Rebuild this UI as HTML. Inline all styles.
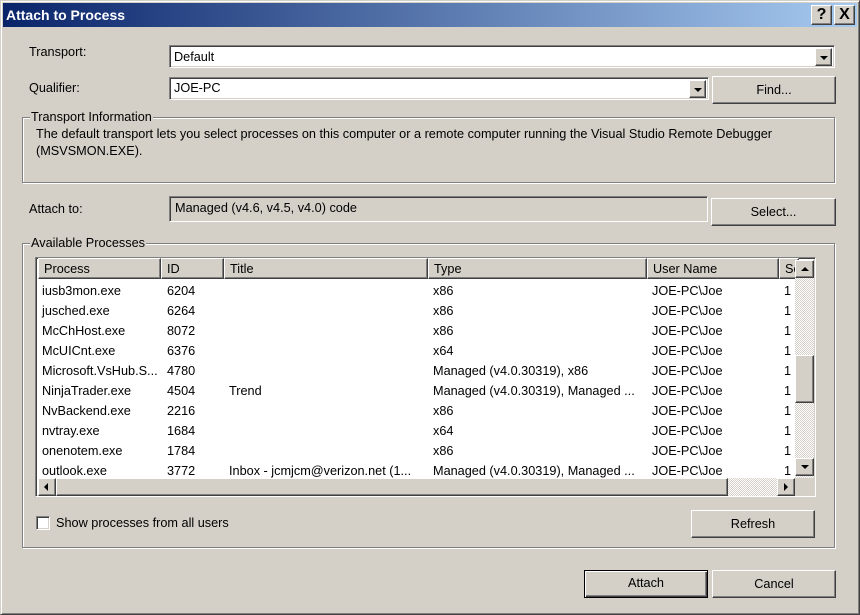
<!DOCTYPE html>
<html><head><meta charset="utf-8"><style>
*{box-sizing:border-box;margin:0;padding:0}
body{width:860px;height:615px;overflow:hidden;background:#d4d0c8;font-family:"Liberation Sans","DejaVu Sans",sans-serif;font-size:12.7px;color:#000;position:relative}
.a{position:absolute}
.win{left:0;top:0;width:860px;height:615px;border:1px solid #d4d0c8;border-right-color:#404040;border-bottom-color:#404040;box-shadow:inset 1px 1px 0 #fff,inset -1px -1px 0 #808080}
.title{left:3px;top:3px;width:854px;height:24px;background:linear-gradient(to right,#0a246a,#a6caf0);color:#fff;font-weight:bold;font-size:14px;line-height:24px;padding-left:3px}
.tb{top:5px;width:21px;height:20px;background:#d4d0c8;border:1px solid;border-color:#fff #404040 #404040 #fff;box-shadow:inset -1px -1px 0 #808080;font-weight:bold;font-size:16px;line-height:18px;text-align:center;color:#000}
.sunk{border:1px solid;border-color:#808080 #fff #fff #808080;box-shadow:inset 1px 1px 0 #404040,inset -1px -1px 0 #d4d0c8}
.btn{background:#d4d0c8;border:1px solid;border-color:#fff #404040 #404040 #fff;box-shadow:inset -1px -1px 0 #808080;text-align:center}
.grp{border:1px solid #808080;box-shadow:1px 1px 0 #fff,inset 1px 1px 0 #fff}
.gl{background:#d4d0c8;padding:0 1px}
.dd{width:17px;height:18px;top:2px;right:2px}
.arr{width:0;height:0;border-left:4px solid transparent;border-right:4px solid transparent;border-top:4px solid #000;position:absolute;left:4px;top:7px}
.row{position:absolute;left:0;height:20px;line-height:20px;width:760px;white-space:nowrap}
.row span{position:absolute}
.hd{position:absolute;top:0;height:21px;line-height:21px;background:#d4d0c8;border:1px solid;border-color:#fff #404040 #404040 #fff;box-shadow:inset -1px -1px 0 #808080;padding-left:5px;white-space:nowrap;overflow:hidden}
.chk{background:repeating-conic-gradient(#d4d0c8 0 25%,#fff 0 50%) 0 0/2px 2px}
</style></head><body>
<div class="a win"></div>
<div class="a title">Attach to Process</div>
<div class="a tb" style="left:811px">?</div>
<div class="a tb" style="left:834px">X</div>

<div class="a" style="left:29px;top:45px">Transport:</div>
<div class="a sunk" style="left:169px;top:45px;width:666px;height:23px;background:#fff"><div class="a" style="left:4px;top:4px">Default</div><div class="a btn dd"><div class="arr"></div></div></div>
<div class="a" style="left:29px;top:81px">Qualifier:</div>
<div class="a sunk" style="left:169px;top:77px;width:540px;height:23px;background:#fff"><div class="a" style="left:4px;top:3px">JOE-PC</div><div class="a btn dd"><div class="arr"></div></div></div>
<div class="a btn" style="left:712px;top:76px;width:124px;height:28px;line-height:26px">Find...</div>

<div class="a grp" style="left:22px;top:117px;width:813px;height:66px"></div>
<div class="a gl" style="left:30px;top:110px">Transport Information</div>
<div class="a" style="left:36px;top:126px;line-height:17px">The default transport lets you select processes on this computer or a remote computer running the Visual Studio Remote Debugger<br>(MSVSMON.EXE).</div>

<div class="a" style="left:29px;top:202px">Attach to:</div>
<div class="a sunk" style="left:169px;top:196px;width:539px;height:26px"><div class="a" style="left:5px;top:4px">Managed (v4.6, v4.5, v4.0) code</div></div>
<div class="a btn" style="left:711px;top:198px;width:125px;height:28px;line-height:26px">Select...</div>

<div class="a grp" style="left:22px;top:243px;width:813px;height:305px"></div>
<div class="a gl" style="left:30px;top:236px">Available Processes</div>

<div class="a sunk" style="left:35px;top:257px;width:781px;height:240px;background:#fff;overflow:hidden">
 <div class="hd" style="left:2px;width:123px">Process</div>
 <div class="hd" style="left:125px;width:63px">ID</div>
 <div class="hd" style="left:188px;width:204px">Title</div>
 <div class="hd" style="left:392px;width:219px">Type</div>
 <div class="hd" style="left:611px;width:132px">User Name</div>
 <div class="hd" style="left:743px;width:20px">Se</div>
 <div class="a" style="left:2px;top:23px">
  <div class="row" style="top:0"><span style="left:4px">iusb3mon.exe</span><span style="left:129px">6204</span><span style="left:395px">x86</span><span style="left:614px">JOE-PC\Joe</span><span style="left:746px">1</span></div>
  <div class="row" style="top:20px"><span style="left:4px">jusched.exe</span><span style="left:129px">6264</span><span style="left:395px">x86</span><span style="left:614px">JOE-PC\Joe</span><span style="left:746px">1</span></div>
  <div class="row" style="top:40px"><span style="left:4px">McChHost.exe</span><span style="left:129px">8072</span><span style="left:395px">x86</span><span style="left:614px">JOE-PC\Joe</span><span style="left:746px">1</span></div>
  <div class="row" style="top:60px"><span style="left:4px">McUICnt.exe</span><span style="left:129px">6376</span><span style="left:395px">x64</span><span style="left:614px">JOE-PC\Joe</span><span style="left:746px">1</span></div>
  <div class="row" style="top:80px"><span style="left:4px">Microsoft.VsHub.S...</span><span style="left:129px">4780</span><span style="left:395px">Managed (v4.0.30319), x86</span><span style="left:614px">JOE-PC\Joe</span><span style="left:746px">1</span></div>
  <div class="row" style="top:100px"><span style="left:4px">NinjaTrader.exe</span><span style="left:129px">4504</span><span style="left:191px">Trend</span><span style="left:395px">Managed (v4.0.30319), Managed ...</span><span style="left:614px">JOE-PC\Joe</span><span style="left:746px">1</span></div>
  <div class="row" style="top:120px"><span style="left:4px">NvBackend.exe</span><span style="left:129px">2216</span><span style="left:395px">x86</span><span style="left:614px">JOE-PC\Joe</span><span style="left:746px">1</span></div>
  <div class="row" style="top:140px"><span style="left:4px">nvtray.exe</span><span style="left:129px">1684</span><span style="left:395px">x64</span><span style="left:614px">JOE-PC\Joe</span><span style="left:746px">1</span></div>
  <div class="row" style="top:160px"><span style="left:4px">onenotem.exe</span><span style="left:129px">1784</span><span style="left:395px">x86</span><span style="left:614px">JOE-PC\Joe</span><span style="left:746px">1</span></div>
  <div class="row" style="top:180px"><span style="left:4px">outlook.exe</span><span style="left:129px">3772</span><span style="left:191px">Inbox - jcmjcm@verizon.net (1...</span><span style="left:395px">Managed (v4.0.30319), Managed ...</span><span style="left:614px">JOE-PC\Joe</span><span style="left:746px">1</span></div>
 </div>
 <div class="a chk" style="left:759px;top:2px;width:19px;height:218px"></div>
 <div class="a btn" style="left:759px;top:2px;width:19px;height:18px"><div style="position:absolute;left:5px;top:6px;border-left:4px solid transparent;border-right:4px solid transparent;border-bottom:4px solid #000"></div></div>
 <div class="a btn" style="left:759px;top:97px;width:19px;height:48px"></div>
 <div class="a btn" style="left:759px;top:200px;width:19px;height:18px"><div style="position:absolute;left:5px;top:6px;border-left:4px solid transparent;border-right:4px solid transparent;border-top:4px solid #000"></div></div>
 <div class="a" style="left:2px;top:220px;width:757px;height:18px;background:#d4d0c8"></div>
 <div class="a chk" style="left:692px;top:220px;width:50px;height:18px"></div>
 <div class="a btn" style="left:2px;top:220px;width:18px;height:18px"><div style="position:absolute;left:5px;top:4px;border-top:4px solid transparent;border-bottom:4px solid transparent;border-right:4px solid #000"></div></div>
 <div class="a btn" style="left:20px;top:220px;width:672px;height:18px"></div>
 <div class="a btn" style="left:741px;top:220px;width:18px;height:18px"><div style="position:absolute;left:6px;top:4px;border-top:4px solid transparent;border-bottom:4px solid transparent;border-left:4px solid #000"></div></div>
 <div class="a" style="left:759px;top:220px;width:20px;height:18px;background:#d4d0c8"></div>
</div>

<div class="a sunk" style="left:36px;top:516px;width:14px;height:14px;background:#fff"></div>
<div class="a" style="left:56px;top:516px">Show processes from all users</div>
<div class="a btn" style="left:691px;top:510px;width:124px;height:28px;line-height:26px">Refresh</div>

<div class="a btn" style="left:584px;top:570px;width:124px;height:28px;line-height:24px;border:1px solid #000;box-shadow:inset 1px 1px 0 #fff,inset -1px -1px 0 #404040,inset -2px -2px 0 #808080">Attach</div>
<div class="a btn" style="left:712px;top:570px;width:124px;height:28px;line-height:26px">Cancel</div>
</body></html>
